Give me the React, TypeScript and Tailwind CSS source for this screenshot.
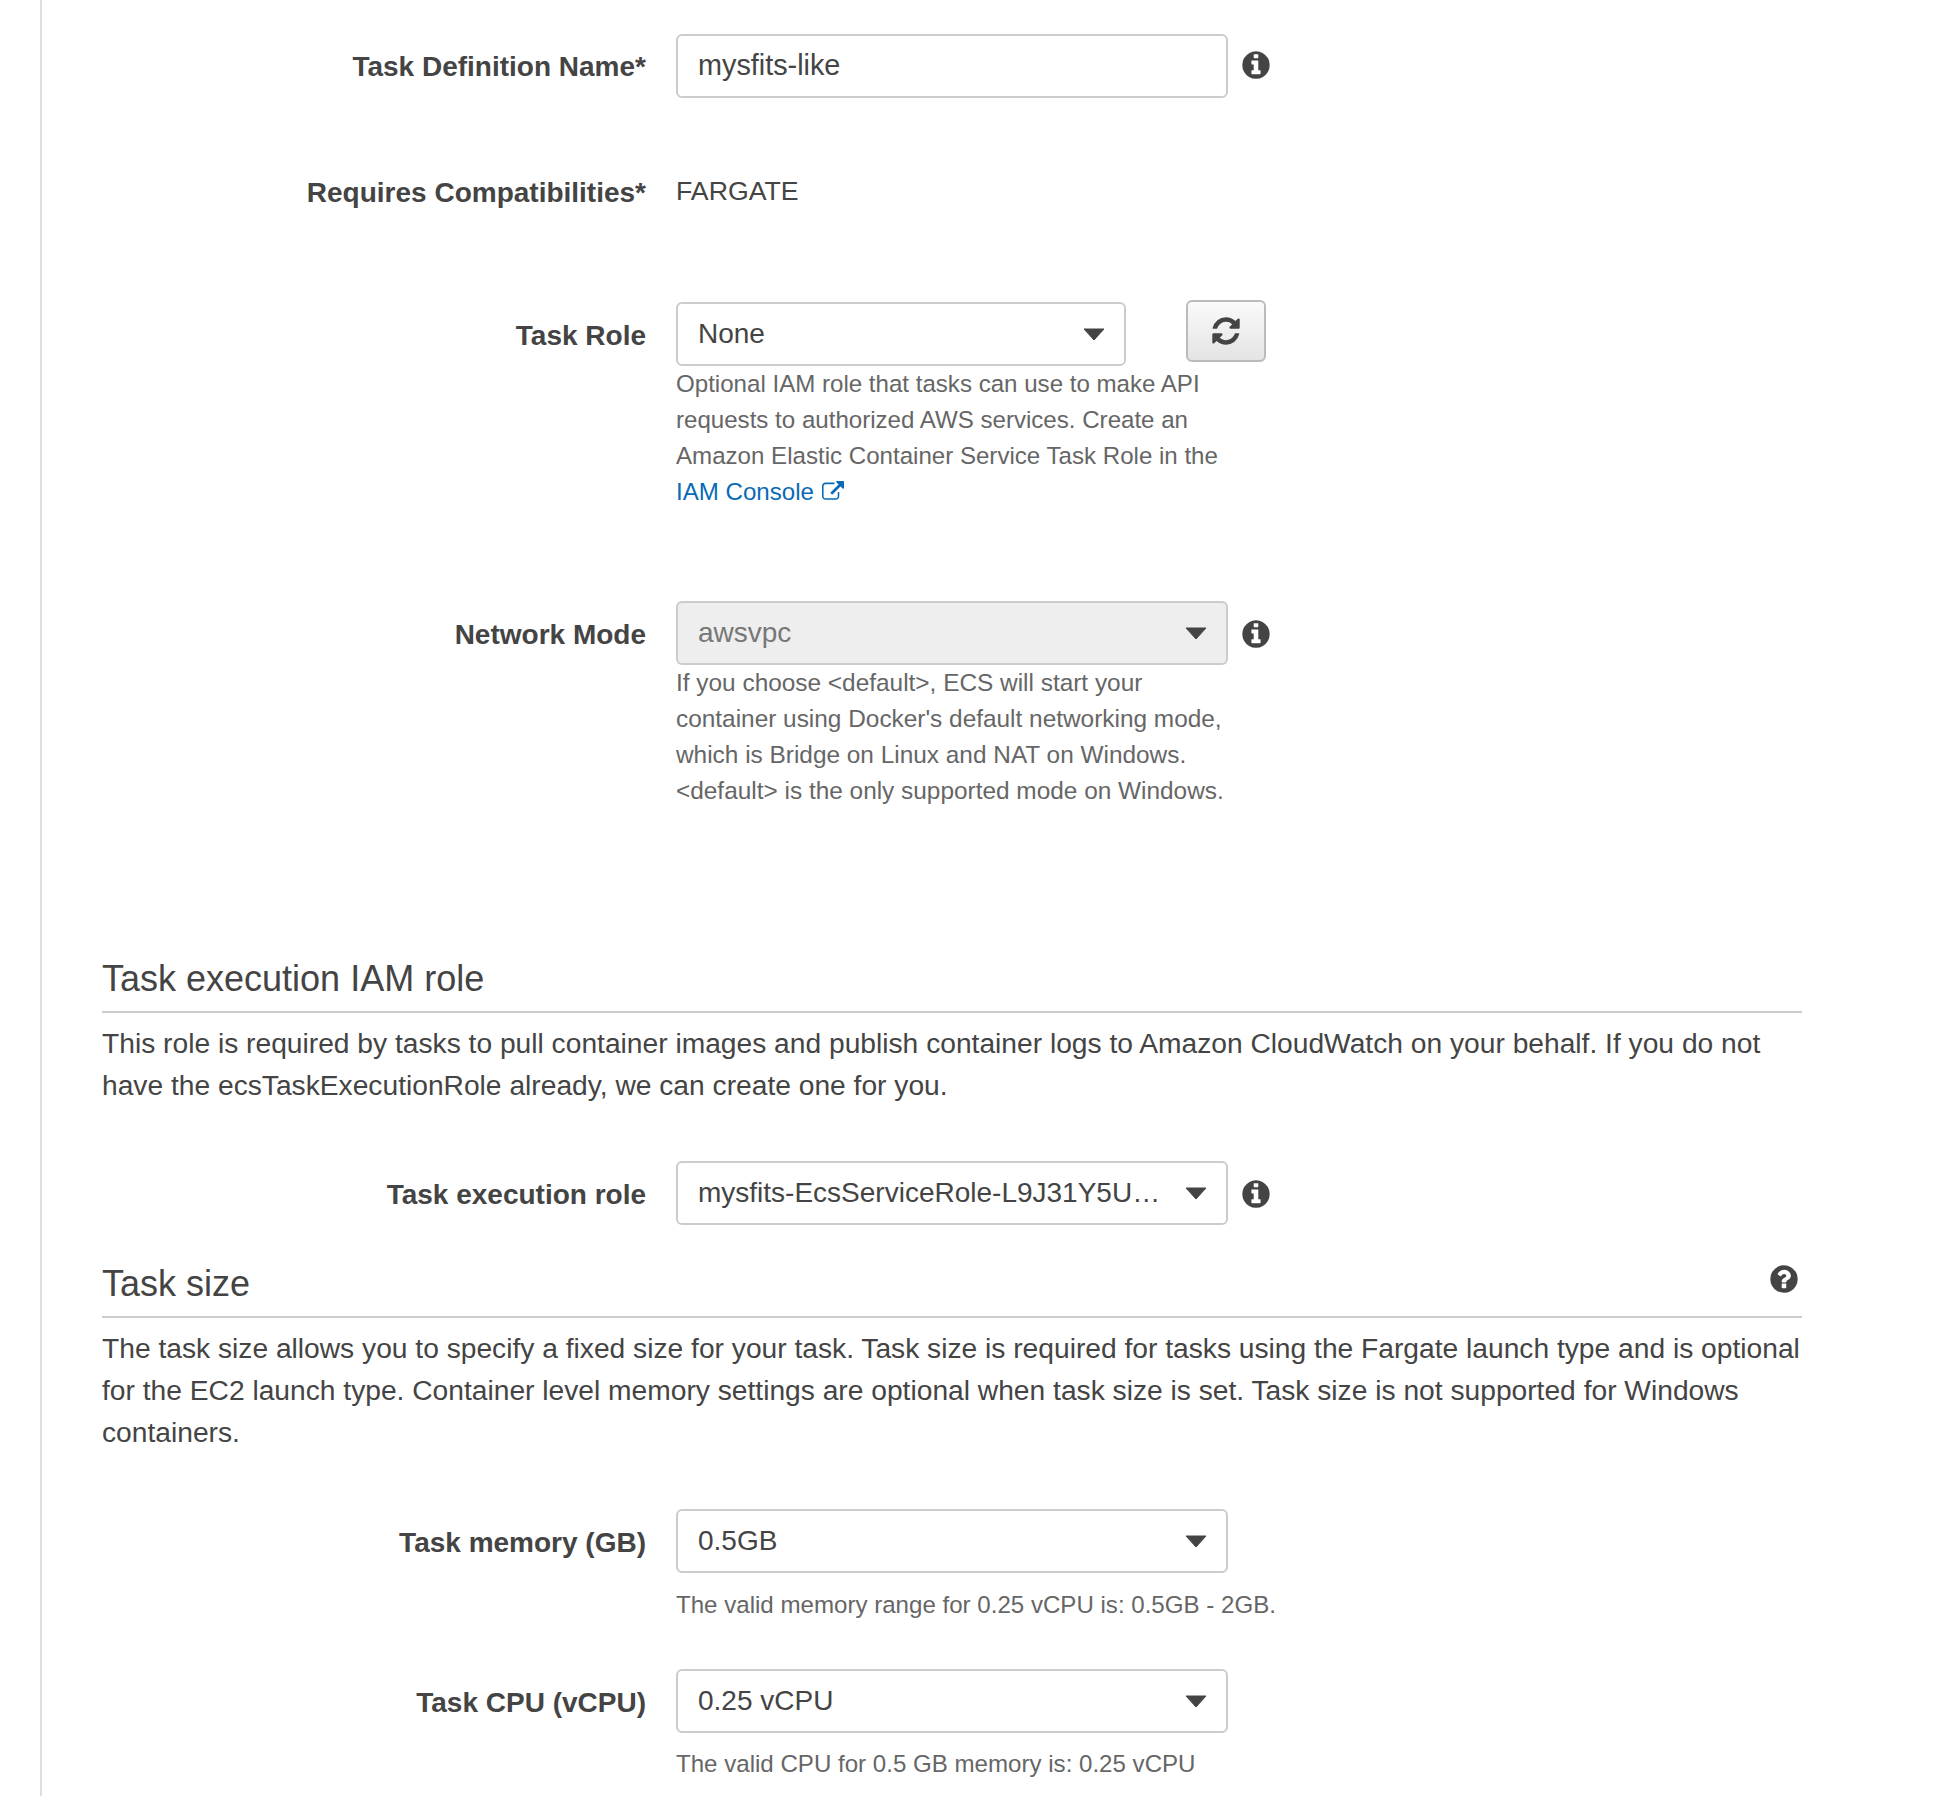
import { ReactNode } from "react";

const INFO_PATH =
  "M1152 1376v-160q0-14-9-23t-23-9h-96v-512q0-14-9-23t-23-9h-320q-14 0-23 9t-9 23v160q0 14 9 23t23 9h96v320h-96q-14 0-23 9t-9 23v160q0 14 9 23t23 9h448q14 0 23-9t9-23zm-128-896v-160q0-14-9-23t-23-9h-192q-14 0-23 9t-9 23v160q0 14 9 23t23 9h192q14 0 23-9t9-23zm640 416q0 209-103 385.5t-279.5 279.5-385.5 103-385.5-103-279.5-279.5-103-385.5 103-385.5 279.5-279.5 385.5-103 385.5 103 279.5 279.5 103 385.5z";
const QUESTION_PATH =
  "M1024 1376v-192q0-14-9-23t-23-9h-192q-14 0-23 9t-9 23v192q0 14 9 23t23 9h192q14 0 23-9t9-23zm256-672q0-88-55.5-163t-138.5-116-170-41q-243 0-371 213-15 24 8 42l132 100q7 6 19 6 16 0 25-12 53-68 86-92 34-24 86-24 48 0 85.5 26t37.5 59q0 38-20 61t-68 45q-63 28-115.5 86.5t-52.5 125.5v36q0 14 9 23t23 9h192q14 0 23-9t9-23q0-19 21.5-49.5t54.5-49.5q32-18 49-28.5t46-35 44.5-48 28-60.5 12.5-81zm384 192q0 209-103 385.5t-279.5 279.5-385.5 103-385.5-103-279.5-279.5-103-385.5 103-385.5 279.5-279.5 385.5-103 385.5 103 279.5 279.5 103 385.5z";
const REFRESH_PATH =
  "M1639 1056q0 5-1 7-64 268-268 434.5t-478 166.5q-146 0-282.5-55t-243.5-157l-129 129q-19 19-45 19t-45-19-19-45v-448q0-26 19-45t45-19h448q26 0 45 19t19 45-19 45l-137 137q71 66 161 102t187 36q134 0 250-65t186-179q11-17 53-117 8-23 30-23h192q13 0 22.5 9.5t9.5 22.5zm25-800v448q0 26-19 45t-45 19h-448q-26 0-45-19t-19-45 19-45l138-138q-148-137-349-137-134 0-250 65t-186 179q-11 17-53 117-8 23-30 23h-199q-13 0-22.5-9.5t-9.5-22.5v-7q65-268 270-434.5t480-166.5q146 0 284 55.5t245 156.5l130-129q19-19 45-19t45 19 19 45z";
const EXTERNAL_PATH =
  "M1408 928v320q0 119-84.5 203.5t-203.5 84.5h-832q-119 0-203.5-84.5t-84.5-203.5v-832q0-119 84.5-203.5t203.5-84.5h704q14 0 23 9t9 23v64q0 14-9 23t-23 9h-704q-66 0-113 47t-47 113v832q0 66 47 113t113 47h832q66 0 113-47t47-113v-320q0-14 9-23t23-9h64q14 0 23 9t9 23zm384-864v512q0 26-19 45t-45 19-45-19l-176-176-652 652q-10 10-23 10t-23-10l-114-114q-10-10-10-23t10-23l652-652-176-176q-19-19-19-45t19-45 45-19h512q26 0 45 19t19 45z";

function Glyph({ d, size, className = "" }: { d: string; size: number; className?: string }) {
  return (
    <svg width={size} height={size} viewBox="0 0 1792 1792" className={`shrink-0 ${className}`}>
      <path d={d} fill="currentColor" />
    </svg>
  );
}

function Caret() {
  return (
    <svg width="22" height="13" viewBox="0 0 22 13" className="shrink-0 text-[#444]">
      <path d="M1 1h20L11 12z" fill="currentColor" stroke="currentColor" strokeWidth="1" strokeLinejoin="round" />
    </svg>
  );
}

function Field({
  value,
  width = "w-[552px]",
  disabled,
  caret = true,
  text = "text-[28px]",
}: {
  value: string;
  width?: string;
  disabled?: boolean;
  caret?: boolean;
  text?: string;
}) {
  return (
    <div
      className={`${width} flex h-[64px] shrink-0 items-center gap-[12px] rounded-[6px] border-2 border-[#ccc] pr-[19px] pl-[20px] ${text} ${
        disabled ? "bg-[#eee] text-[#777]" : "bg-white text-[#444]"
      }`}
    >
      <span className="min-w-0 flex-1 truncate">{value}</span>
      {caret && <Caret />}
    </div>
  );
}

function Row({
  label,
  children,
  className = "",
  labelPad = "pt-[12px]",
}: {
  label: string;
  children: ReactNode;
  className?: string;
  labelPad?: string;
}) {
  return (
    <div className={`flex items-start ${className}`}>
      <div className={`w-[544px] ${labelPad} text-right text-[28px] leading-[44px] font-bold text-[#444]`}>{label}</div>
      <div className="ml-[30px] flex-1">{children}</div>
    </div>
  );
}

function Help({ children, className = "" }: { children: ReactNode; className?: string }) {
  return <div className={`w-[560px] leading-[36px] text-[#666] ${className}`}>{children}</div>;
}

function Info({ className = "mt-[2px]" }: { className?: string }) {
  return <Glyph d={INFO_PATH} size={32} className={`ml-[12px] text-[#444] ${className}`} />;
}

function Heading({ title, help, className = "" }: { title: string; help?: boolean; className?: string }) {
  return (
    <div className={`flex items-center justify-between border-b-2 border-[#ccc] pb-[8px] ${className}`}>
      <h2 className="text-[36px] leading-[48px] text-[#444]">{title}</h2>
      {help && <Glyph d={QUESTION_PATH} size={32} className="mr-[2px] mb-[10px] text-[#444]" />}
    </div>
  );
}

export default function App() {
  return (
    <div className="h-[1796px] w-[1940px] overflow-hidden bg-white font-['Liberation_Sans',Arial,sans-serif]">
      <div className="ml-[40px] h-full w-[1762px] border-l-2 border-[#ddd] pl-[60px]">
        <div className="pt-[34px]">
          <Row label="Task Definition Name*" labelPad="pt-[11px]">
            <div className="flex items-center">
              <Field value="mysfits-like" caret={false} text="text-[28.8px]" />
              <Info className="mb-[3px]" />
            </div>
          </Row>

          <Row label="Requires Compatibilities*" labelPad="pt-[10px]" className="mt-[63px]">
            <div className="pt-[8px] text-[26.7px] leading-[44px] text-[#444]">FARGATE</div>
          </Row>

          <Row label="Task Role" className="mt-[87px]">
            <div className="flex items-start">
              <Field value="None" width="w-[450px]" />
              <button className="mt-[-2px] ml-[60px] flex h-[62px] w-[80px] items-center justify-center rounded-[6px] border-2 border-[#bbb] bg-gradient-to-b from-[#fafafa] to-[#e4e4e4] text-[#444]">
                <Glyph d={REFRESH_PATH} size={32} />
              </button>
            </div>
            <Help className="text-[24.1px]">
              Optional IAM role that tasks can use to make API requests to authorized AWS services. Create an Amazon
              Elastic Container Service Task Role in the{" "}
              <a className="inline-flex items-center text-[#0a6ab5]">
                IAM Console
                <Glyph d={EXTERNAL_PATH} size={22} className="ml-[8px]" />
              </a>
            </Help>
          </Row>

          <Row label="Network Mode" className="mt-[91px]">
            <div className="flex items-center">
              <Field value="awsvpc" disabled />
              <Info />
            </div>
            <Help className="text-[24.4px]">
              If you choose &lt;default&gt;, ECS will start your container using Docker's default networking mode, which
              is Bridge on Linux and NAT on Windows. &lt;default&gt; is the only supported mode on Windows.
            </Help>
          </Row>
        </div>

        <Heading title="Task execution IAM role" className="mt-[146px]" />
        <p className="mt-[9px] text-[28.2px] leading-[42px] text-[#444]">
          This role is required by tasks to pull container images and publish container logs to Amazon CloudWatch on
          your behalf. If you do not have the ecsTaskExecutionRole already, we can create one for you.
        </p>

        <Row label="Task execution role" className="mt-[55px]">
          <div className="flex items-center">
            <Field value="mysfits-EcsServiceRole-L9J31Y5UJ3QK" />
            <Info />
          </div>
        </Row>

        <Heading title="Task size" help className="mt-[35px]" />
        <p className="mt-[9px] text-[28.2px] leading-[42px] text-[#444]">
          The task size allows you to specify a fixed size for your task. Task size is required for tasks using the
          Fargate launch type and is optional for the EC2 launch type. Container level memory settings are optional
          when task size is set. Task size is not supported for Windows containers.
        </p>

        <Row label="Task memory (GB)" className="mt-[56px]">
          <Field value="0.5GB" />
          <Help className="mt-[14px] w-[640px] text-[24.1px]">The valid memory range for 0.25 vCPU is: 0.5GB - 2GB.</Help>
        </Row>

        <Row label="Task CPU (vCPU)" className="mt-[46px]">
          <Field value="0.25 vCPU" />
          <Help className="mt-[13px] w-[640px] text-[24.1px]">The valid CPU for 0.5 GB memory is: 0.25 vCPU</Help>
        </Row>
      </div>
    </div>
  );
}
